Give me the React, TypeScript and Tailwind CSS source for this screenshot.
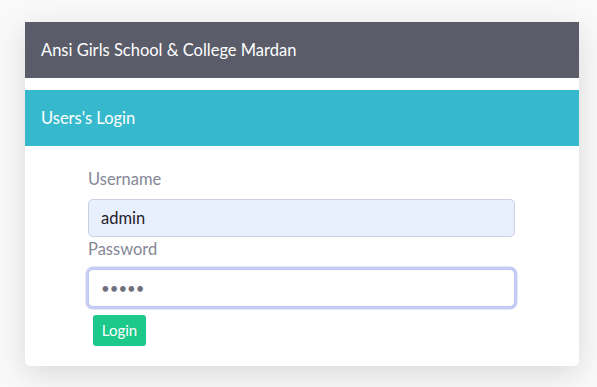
import { useState } from 'react'

export default function App() {
  const [username, setUsername] = useState('admin')
  const [password, setPassword] = useState('admin')

  return (
    <div className="min-h-[387px] bg-[#f9f9f9] pt-[22px] pl-[25px] font-['Lato','Noto_Sans',sans-serif]">
      <div className="w-[554px] bg-white rounded-b-[5px] shadow-[0_8px_30px_rgba(0,0,0,0.13)]">
        <div className="h-[56px] px-4 flex items-center bg-[#5a5c69] text-white text-[16.5px]">
          Ansi Girls School &amp; College Mardan
        </div>
        <div className="mt-3 h-[56px] px-4 flex items-center bg-[#36b9cc] text-white text-[16.5px]">
          Users's Login
        </div>
        <form className="pl-[63px] pt-[21px] pb-[20px]" onSubmit={e => e.preventDefault()}>
          <label className="block text-[16.5px] leading-6 text-[#858796]">Username</label>
          <input
            type="text"
            value={username}
            onChange={e => setUsername(e.target.value)}
            className="mt-2 block w-[427px] h-[38px] px-3 rounded-[5px] border border-[#c9d0e3] bg-[#e8f0fe] text-[16.5px] text-[#1f2128] outline-none"
          />
          <label className="block text-[16.5px] leading-6 text-[#858796]">Password</label>
          <input
            type="password"
            value={password}
            onChange={e => setPassword(e.target.value)}
            className="mt-2 block w-[427px] h-[38px] px-3 rounded-[5px] border border-[#bac8f3] bg-white text-[15px] text-[#6e707e] outline-none shadow-[0_0_0_2.5px_rgba(180,188,240,0.75)]"
          />
          <button type="submit"
            className="mt-2 ml-[5px] w-[53px] h-[31px] rounded-[3px] bg-[#1cc88a] text-white text-[15px]">
            Login
          </button>
        </form>
      </div>
    </div>
  )
}
